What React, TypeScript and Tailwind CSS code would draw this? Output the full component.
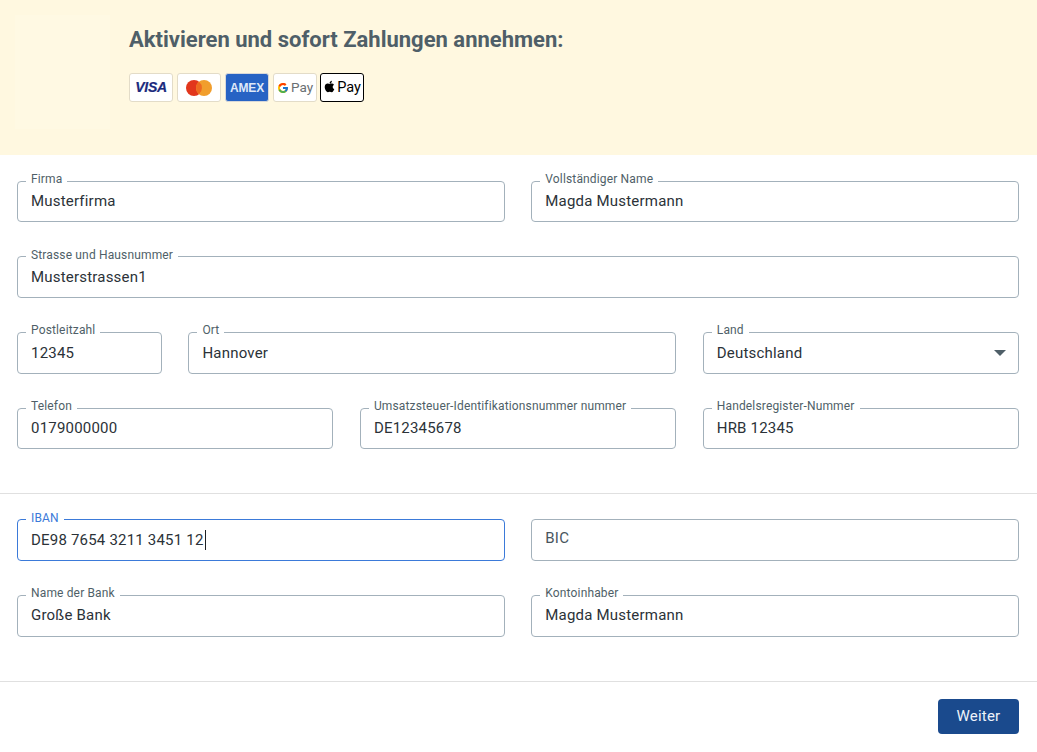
import { FcGoogle } from 'react-icons/fc';
import { FaApple } from 'react-icons/fa';
import { ReactNode } from 'react';

function Field({ label, value, span, focused, select }: { label?: string; value?: string; span: string; focused?: boolean; select?: boolean }) {
  return (
    <div className={`relative h-[41.7px] rounded-[4px] border ${focused ? 'border-[#3b7ad9]' : 'border-[#a3b1bb]'} ${span}`}>
      {label && (
        <span className={`absolute left-[8px] top-[-10.5px] bg-white px-[5px] text-[12px] leading-[16px] tracking-[0.15px] ${focused ? 'text-[#3b7ad9]' : 'text-[#4f5f68]'}`}>
          {label}
        </span>
      )}
      <div className="flex h-full items-center justify-between px-[13px] text-[15px] tracking-[0.2px] text-[#2b3238]">
        {value ? (
          <span className="flex items-center">
            {value}
            {focused && <span className="ml-px inline-block h-[20px] w-px bg-[#1c2024]" />}
          </span>
        ) : (
          <span className="mb-[3px] text-[#48555e]">BIC</span>
        )}
        {select && (
          <svg width="12" height="6" viewBox="0 0 12 6" className="mr-[-1px]">
            <path d="M0 0h12L6 6z" fill="#4f5f68" />
          </svg>
        )}
      </div>
    </div>
  );
}

function Card({ children, className }: { children: ReactNode; className: string }) {
  return <div className={`flex h-[29px] w-[44px] items-center justify-center rounded-[3px] border ${className}`}>{children}</div>;
}

export default function App() {
  return (
    <div className="h-[752px] w-[1037px] overflow-hidden bg-white font-['Roboto',sans-serif]">
      <div className="flex h-[155px] bg-[#fff8e0] pl-[15px] pt-[15px]">
        <div className="h-[114px] w-[95px] bg-[#fff9e3]" />
        <div className="ml-[19px] pt-[11px]">
          <h1 className="text-[22px] font-bold leading-[28px] text-[#4f5f68]">Aktivieren und sofort Zahlungen annehmen:</h1>
          <div className="mt-[19px] flex gap-[4px]">
            <Card className="border-[#e3dcc8] bg-white">
              <span className="font-['Liberation_Sans',sans-serif] text-[14px] font-bold italic tracking-[-0.3px] text-[#1a2a7c] [-webkit-text-stroke:0.2px_#1a2a7c]">VISA</span>
            </Card>
            <Card className="border-[#e3dcc8] bg-white">
              <svg width="28" height="18" viewBox="0 0 28 18">
                <circle cx="9" cy="9" r="8" fill="#e2361c" />
                <circle cx="19" cy="9" r="8" fill="#f19e2c" />
                <path d="M14 2.8a8 8 0 0 1 0 12.4a8 8 0 0 1 0-12.4z" fill="#ee6a20" />
              </svg>
            </Card>
            <Card className="border-[#d8d8d8] bg-[#2763c4]">
              <span className="font-['Liberation_Sans',sans-serif] text-[12px] font-bold tracking-[-0.2px] text-[#dfe9f8]">AMEX</span>
            </Card>
            <Card className="gap-[2px] border-[#e3dcc8] bg-white">
              <FcGoogle className="h-[12px] w-[12px]" />
              <span className="text-[13.5px] leading-none text-[#6a6f73]">Pay</span>
            </Card>
            <Card className="ml-[-1px] gap-[1px] border-black bg-white">
              <FaApple className="mb-[2px] h-[13px] w-[13px] text-black" />
              <span className="mt-[2px] text-[14.5px] leading-none text-black">Pay</span>
            </Card>
          </div>
        </div>
      </div>

      <div className="grid grid-cols-12 gap-x-[26.67px] gap-y-[33.95px] pl-[17px] pr-[18px] pt-[25.7px]">
        <Field span="col-span-6" label="Firma" value="Musterfirma" />
        <Field span="col-span-6" label="Vollständiger Name" value="Magda Mustermann" />
        <Field span="col-span-12" label="Strasse und Hausnummer" value="Musterstrassen1" />
        <Field span="col-span-2" label="Postleitzahl" value="12345" />
        <Field span="col-span-6" label="Ort" value="Hannover" />
        <Field span="col-span-4" label="Land" value="Deutschland" select />
        <Field span="col-span-4" label="Telefon" value="0179000000" />
        <Field span="col-span-4" label="Umsatzsteuer-Identifikationsnummer nummer" value="DE12345678" />
        <Field span="col-span-4" label="Handelsregister-Nummer" value="HRB 12345" />
      </div>

      <div className="mt-[44px] border-t border-[#e0e0e0]" />

      <div className="grid grid-cols-12 gap-x-[26.67px] gap-y-[33.95px] pl-[17px] pr-[18px] pt-[25px]">
        <Field span="col-span-6" label="IBAN" value="DE98 7654 3211 3451 12" focused />
        <Field span="col-span-6" />
        <Field span="col-span-6" label="Name der Bank" value="Große Bank" />
        <Field span="col-span-6" label="Kontoinhaber" value="Magda Mustermann" />
      </div>

      <div className="mt-[44px] border-t border-[#e0e0e0]" />

      <div className="flex justify-end pr-[18px] pt-[17px]">
        <button className="h-[35px] w-[81px] rounded-[4px] bg-[#1a4a8d] text-[15px] tracking-[0.2px] text-[#eef3fa]">Weiter</button>
      </div>
    </div>
  );
}
